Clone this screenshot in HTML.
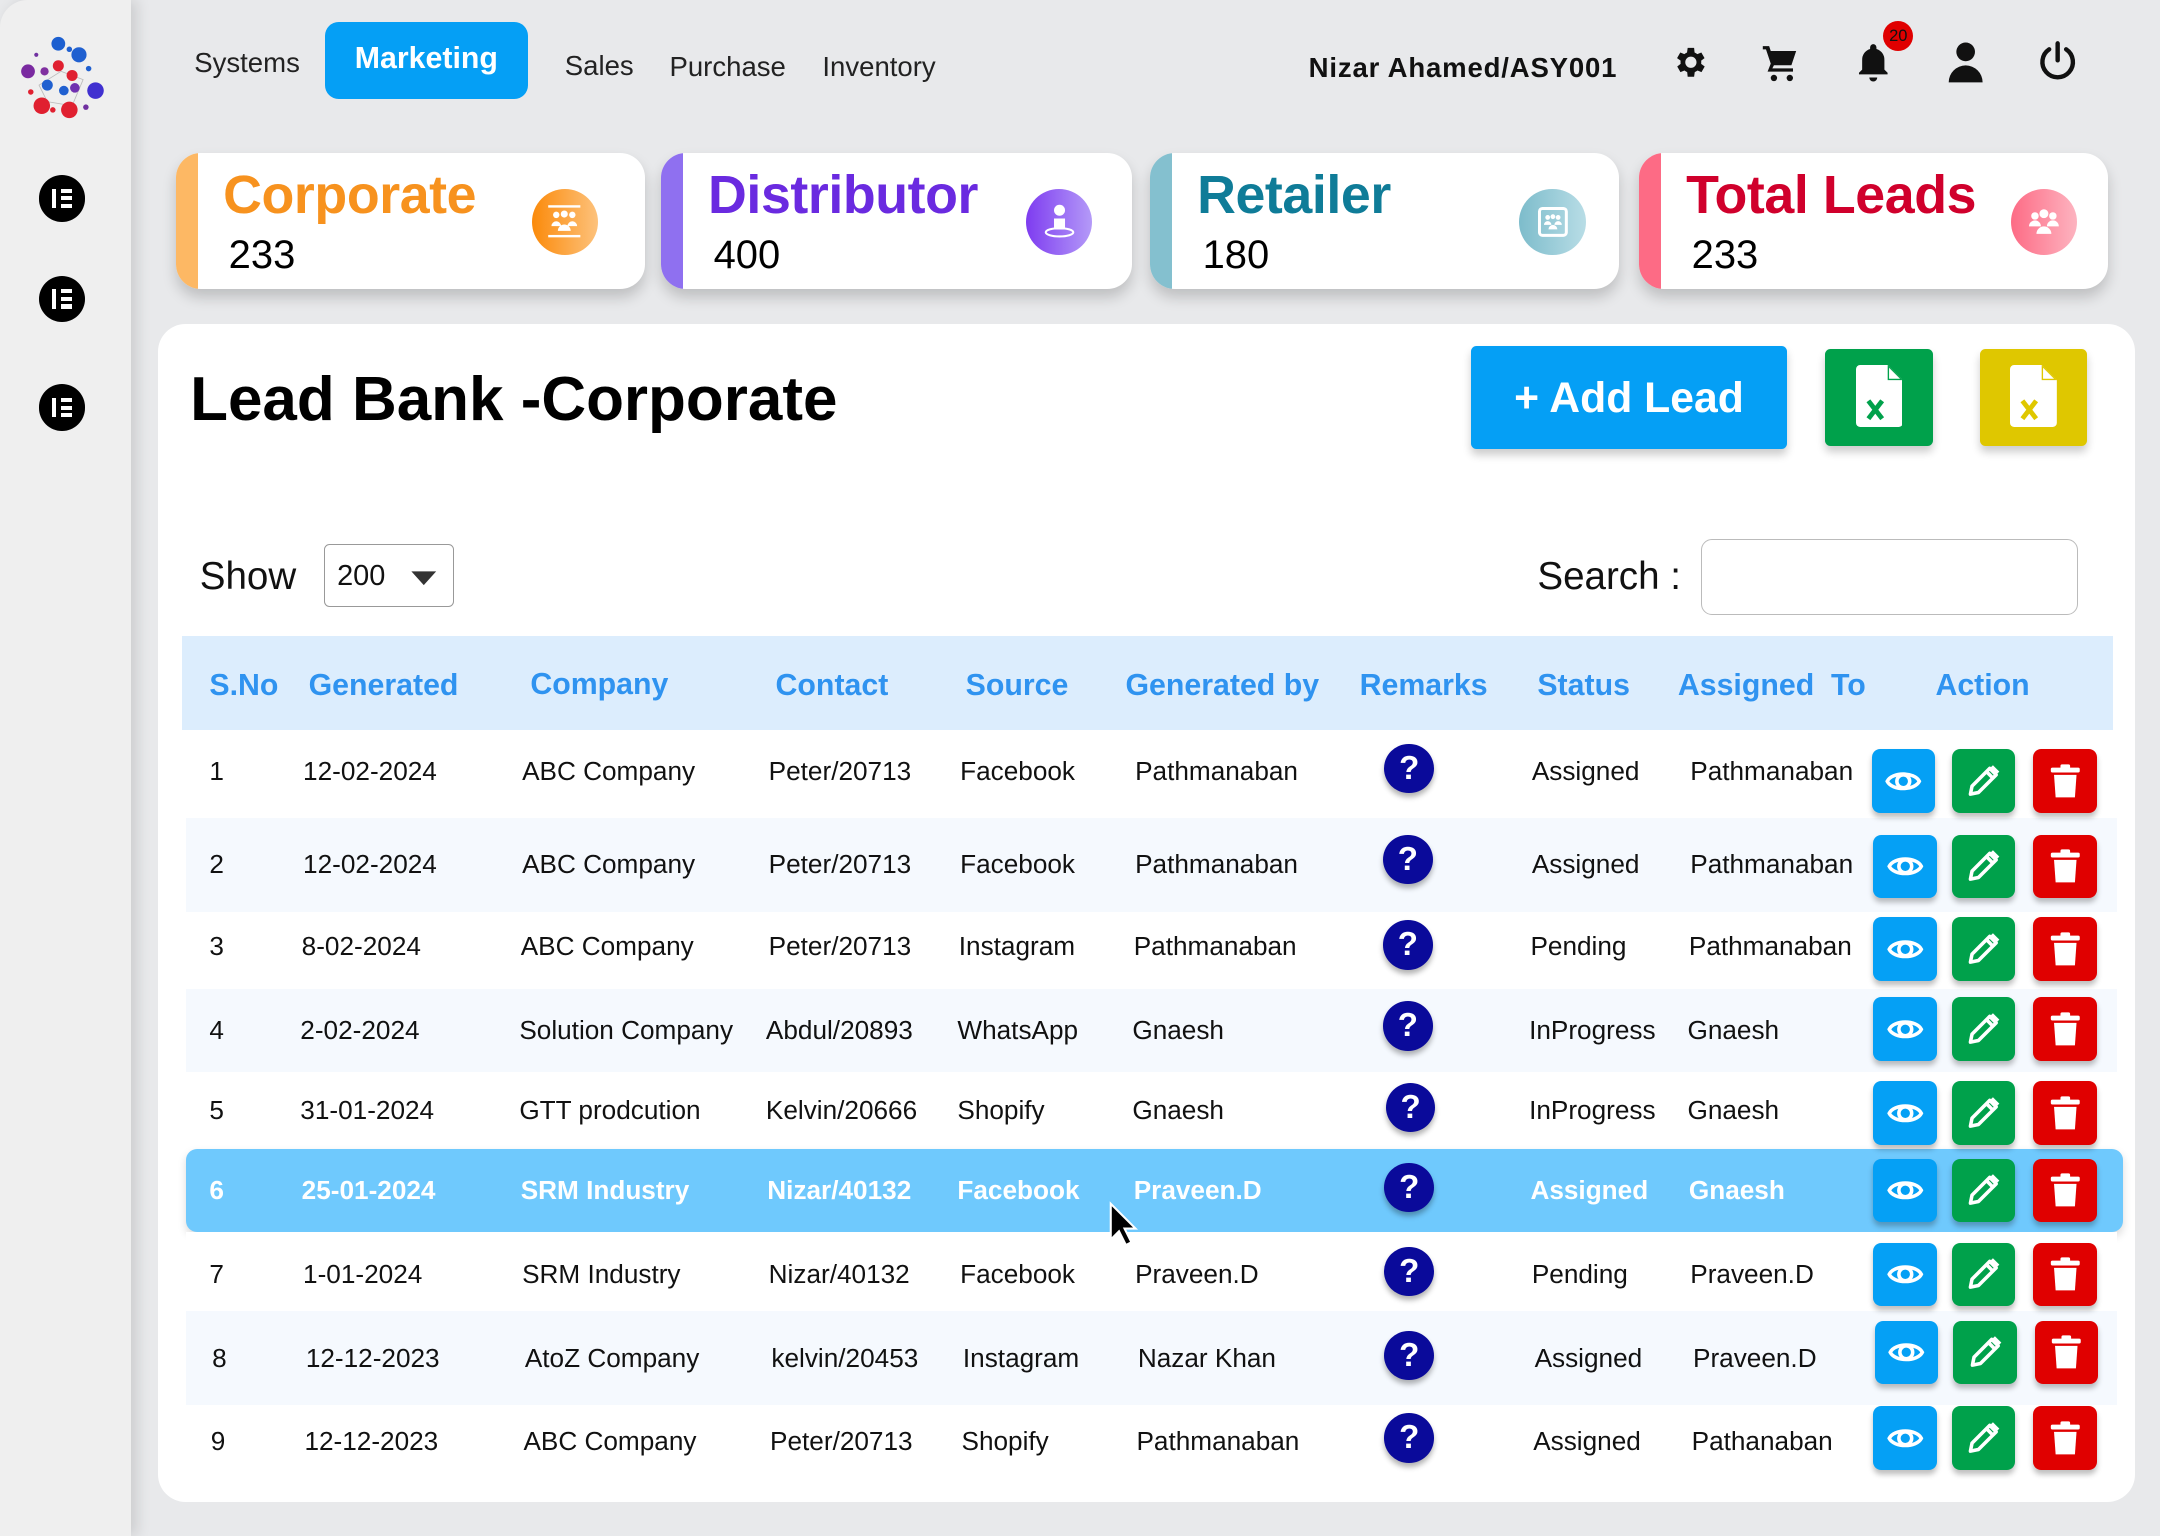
<!DOCTYPE html>
<html><head><meta charset="utf-8">
<style>
html,body{margin:0;padding:0;width:2160px;height:1536px;overflow:hidden;background:#e8e9eb}
#z{zoom:1.37755;width:1568px;height:1115px;position:relative;font-family:"Liberation Sans",sans-serif;color:#111}
.a{position:absolute}
.side{left:0;top:0;width:95px;height:1115px;background:#efefef;box-shadow:4px 0 10px rgba(0,0,0,.12);border-radius:20px 0 0 0}
.sico{width:34px;height:34px;border-radius:50%;background:#000;left:28px}
.sico i{position:absolute;left:10px;top:10px;width:3px;height:14px;background:#fff}
.sico b{position:absolute;left:16px;width:8px;height:3px;background:#fff}
.nav{top:34px;font-size:20px;color:#222}
.card{height:99px;top:111px;background:#fff;border-radius:18px;box-shadow:0 6px 10px rgba(0,0,0,.18);overflow:hidden}
.card .bar{left:0;top:0;width:16px;height:100%}
.card .t{left:34px;top:8px;font-size:39px;font-weight:bold;letter-spacing:-0.3px}
.card .n{left:38px;top:58px;font-size:29px;color:#000}
.card .ic{width:48px;height:48px;border-radius:50%;top:26px}
.panel{left:115px;top:235px;width:1435px;height:855px;background:#fff;border-radius:20px}
.hd{left:132px;top:462px;width:1402px;height:68px;background:#dcedfd}
.hd span{position:absolute;top:24px;font-size:22px;font-weight:bold;color:#2f93f0}
.row{left:135px;width:1402px}
.row span{position:absolute;font-size:19px;color:#111;white-space:nowrap}
.hl{background:#6fc9fd;border-radius:8px;box-shadow:0 3px 6px rgba(0,0,0,.15)}
.hl span{color:#fff;font-weight:bold}
.q{width:36px;height:36px;border-radius:50%;background:#0a0a9a;box-shadow:0 3px 4px rgba(0,0,0,.3);color:#fff;font-weight:bold;font-size:24px;text-align:center;line-height:36px}
.btn{width:46px;height:46px;border-radius:6px;box-shadow:0 3px 4px rgba(0,0,0,.25)}
.btn svg{position:absolute;left:9px;top:9px}
</style></head><body><div id="z">
<svg width="0" height="0" style="position:absolute">
<symbol id="eye" viewBox="0 0 24 24"><path d="M2 12C5 6 19 6 22 12C19 18 5 18 2 12Z" fill="none" stroke="#fff" stroke-width="2.2"/><circle cx="12" cy="12" r="4" fill="none" stroke="#fff" stroke-width="2.2"/></symbol>
<symbol id="pen" viewBox="0 0 24 24"><path d="M4 20L5 15L16 4L20 8L9 19Z" fill="none" stroke="#fff" stroke-width="2.2" stroke-linejoin="round"/><path d="M14 6L18 10" stroke="#fff" stroke-width="2.2"/><path d="M16 4L20 8L22 6L18 2Z" fill="#fff"/></symbol>
<symbol id="trash" viewBox="0 0 24 24"><rect x="3" y="3.5" width="18" height="3" rx="1" fill="#fff"/><rect x="9" y="1.5" width="6" height="3" rx="1" fill="#fff"/><path d="M5 8H19L18 22H6Z" fill="#fff"/></symbol>
</svg>
<div class="a side"></div>
<svg class="a" style="left:12px;top:22px" width="70" height="70" viewBox="0 0 70 70">
<g stroke="#bbb" stroke-width=".6" fill="none"><path d="M16 40L32 30L48 36L40 55L22 52Z"/></g>
<circle cx="30" cy="10" r="5" fill="#1c5fd0"/><circle cx="45" cy="18" r="5.5" fill="#2060d0"/><circle cx="38" cy="14" r="2" fill="#2060d0"/>
<circle cx="8" cy="30" r="5" fill="#7a2aa0"/><circle cx="20" cy="30" r="3" fill="#8030a0"/><circle cx="30" cy="26" r="4" fill="#e02030"/>
<circle cx="40" cy="33" r="4" fill="#e02030"/><circle cx="52" cy="28" r="2" fill="#2060d0"/><circle cx="22" cy="40" r="4" fill="#2060d0"/>
<circle cx="34" cy="44" r="3.5" fill="#2060d0"/><circle cx="42" cy="42" r="3.5" fill="#7030b0"/><circle cx="57" cy="44" r="6" fill="#4030d0"/>
<circle cx="10" cy="45" r="2" fill="#e02030"/><circle cx="18" cy="55" r="6" fill="#e02030"/><circle cx="38" cy="58" r="6" fill="#e02030"/>
<circle cx="26" cy="58" r="2" fill="#e02030"/><circle cx="50" cy="56" r="2" fill="#7030a0"/><circle cx="14" cy="18" r="1.5" fill="#7030a0"/>
</svg>
<div class="a sico" style="top:127px"><i></i><b style="top:10px"></b><b style="top:15.5px"></b><b style="top:21px"></b></div>
<div class="a sico" style="top:200px"><i></i><b style="top:10px"></b><b style="top:15.5px"></b><b style="top:21px"></b></div>
<div class="a sico" style="top:279px"><i></i><b style="top:10px"></b><b style="top:15.5px"></b><b style="top:21px"></b></div>

<div class="a nav" style="left:141px">Systems</div>
<div class="a" style="left:236px;top:16px;width:147px;height:56px;background:#059ff5;border-radius:10px;color:#fff;font-weight:bold;font-size:22px;text-align:center;line-height:54px">Marketing</div>
<div class="a nav" style="left:410px;top:36px">Sales</div>
<div class="a nav" style="left:486px;top:37px">Purchase</div>
<div class="a nav" style="left:597px;top:37px">Inventory</div>
<div class="a" style="left:950px;top:38px;font-size:20px;font-weight:bold;color:#111;letter-spacing:.6px">Nizar Ahamed/ASY001</div>
<svg class="a" style="left:1212px;top:31px" width="28" height="28" viewBox="0 0 24 24"><path fill="#111" d="M19.4 13a7.5 7.5 0 000-2l2.1-1.6-2-3.5-2.5 1a7.3 7.3 0 00-1.7-1L15 3h-4l-.4 2.9a7.3 7.3 0 00-1.7 1l-2.5-1-2 3.5L6.6 11a7.5 7.5 0 000 2l-2.1 1.6 2 3.5 2.5-1a7.3 7.3 0 001.7 1L11 21h4l.4-2.9a7.3 7.3 0 001.7-1l2.5 1 2-3.5ZM13 15.5A3.5 3.5 0 1113 8.5a3.5 3.5 0 010 7Z"/></svg>
<svg class="a" style="left:1278px;top:31px" width="28" height="30" viewBox="0 0 24 26"><path fill="#111" d="M1 2h4l1 3h16l-3 9H8l-1 2h13v2H4l2-5L3 4H1Z"/><circle cx="8" cy="22" r="2" fill="#111"/><circle cx="18" cy="22" r="2" fill="#111"/></svg>
<svg class="a" style="left:1346px;top:30px" width="28" height="30" viewBox="0 0 24 26"><path fill="#111" d="M12 2a2 2 0 012 2v1a7 7 0 015 7v6l2 2v1H3v-1l2-2v-6a7 7 0 015-7V4a2 2 0 012-2Z"/><path fill="#111" d="M9.5 23h5a2.5 2.5 0 01-5 0Z"/></svg>
<div class="a" style="left:1367px;top:15px;width:22px;height:22px;border-radius:50%;background:#e00000;color:#111;font-size:12px;text-align:center;line-height:22px">20</div>
<svg class="a" style="left:1412px;top:29px" width="30" height="32" viewBox="0 0 24 26"><circle cx="12" cy="7" r="5.5" fill="#111"/><path fill="#111" d="M2 25a10 10 0 0120 0Z"/></svg>
<svg class="a" style="left:1479px;top:29px" width="30" height="32" viewBox="0 0 24 26"><path d="M12 2v10" stroke="#111" stroke-width="2.6" stroke-linecap="round"/><path d="M7 5.5a9 9 0 1010 0" fill="none" stroke="#111" stroke-width="2.6" stroke-linecap="round"/></svg>

<div class="a card" style="left:128px;width:340px"><div class="a bar" style="background:#fdb864"></div><div class="a t" style="color:#f7921e">Corporate</div><div class="a n">233</div><div class="a ic" style="left:258px;background:linear-gradient(90deg,#fb8a0a,#fdc27c)"><svg class="a" style="left:10px;top:10px" width="28" height="28" viewBox="0 0 24 24"><rect x="2" y="2" width="20" height="1.5" fill="#fff"/><rect x="2" y="20.5" width="20" height="1.5" fill="#fff"/><circle cx="7" cy="8" r="2" fill="#fff"/><circle cx="12" cy="7.5" r="2.2" fill="#fff"/><circle cx="17" cy="8" r="2" fill="#fff"/><path d="M4 15a3 3 0 016 0Z M14 15a3 3 0 016 0Z M8 18a4 4 0 018 0Z" fill="#fff"/></svg></div></div>
<div class="a card" style="left:480px;width:342px"><div class="a bar" style="background:#8f70f0"></div><div class="a t" style="color:#6a2ae0">Distributor</div><div class="a n">400</div><div class="a ic" style="left:265px;background:linear-gradient(90deg,#7e3cf0,#b49af8)"><svg class="a" style="left:12px;top:10px" width="24" height="28" viewBox="0 0 24 28"><circle cx="12" cy="6" r="4" fill="#fff"/><path d="M8 12h8v8H8Z" fill="#fff"/><ellipse cx="12" cy="22" rx="10" ry="3" fill="none" stroke="#fff" stroke-width="1.5"/></svg></div></div>
<div class="a card" style="left:835px;width:340px"><div class="a bar" style="background:#84c0cf"></div><div class="a t" style="color:#0f7c98">Retailer</div><div class="a n">180</div><div class="a ic" style="left:268px;background:linear-gradient(90deg,#7dbccb,#b8dde6)"><svg class="a" style="left:11px;top:11px" width="26" height="26" viewBox="0 0 24 24"><rect x="3" y="3" width="18" height="18" rx="2" fill="none" stroke="#fff" stroke-width="2"/><circle cx="8.5" cy="9" r="1.6" fill="#fff"/><circle cx="12" cy="8.5" r="1.6" fill="#fff"/><circle cx="15.5" cy="9" r="1.6" fill="#fff"/><path d="M6 14a2.5 2.5 0 015 0Z M13 14a2.5 2.5 0 015 0Z M9 17a3 3 0 016 0Z" fill="#fff"/></svg></div></div>
<div class="a card" style="left:1190px;width:340px"><div class="a bar" style="background:#fd6b85"></div><div class="a t" style="color:#d0002c">Total Leads</div><div class="a n">233</div><div class="a ic" style="left:270px;background:linear-gradient(90deg,#fd6b85,#fdb4c0)"><svg class="a" style="left:11px;top:11px" width="26" height="26" viewBox="0 0 24 24"><circle cx="6" cy="8" r="2.5" fill="#fff"/><circle cx="12" cy="6.5" r="3" fill="#fff"/><circle cx="18" cy="8" r="2.5" fill="#fff"/><path d="M2 15a4 4 0 018 0Z M14 15a4 4 0 018 0Z M7 20a5 5 0 0110 0Z" fill="#fff"/></svg></div></div>

<div class="a panel"></div>
<div class="a" style="left:138px;top:264px;font-size:45px;font-weight:bold;color:#000">Lead Bank -Corporate</div>
<div class="a" style="left:1068px;top:251px;width:229px;height:75px;background:#059ff5;border-radius:4px;box-shadow:0 4px 6px rgba(0,0,0,.2);color:#fff;font-size:31px;font-weight:bold;text-align:center;line-height:76px">+ Add Lead</div>
<div class="a" style="left:1325px;top:253px;width:78px;height:71px;background:#00a14b;border-radius:4px;box-shadow:0 4px 6px rgba(0,0,0,.2)"><svg class="a" style="left:22px;top:12px" width="34" height="45" viewBox="0 0 34 45"><path d="M3 0H23L34 11V42a3 3 0 01-3 3H3a3 3 0 01-3-3V3a3 3 0 013-3Z" fill="#fff"/><path d="M23 0V11H34" fill="#00a14b"/><path d="M24 2V10H32Z" fill="#fff"/><path d="M9 26L19 39M19 26L9 39" stroke="#00a14b" stroke-width="3.5"/></svg></div>
<div class="a" style="left:1437px;top:253px;width:78px;height:71px;background:#dfc700;border-radius:4px;box-shadow:0 4px 6px rgba(0,0,0,.2)"><svg class="a" style="left:22px;top:12px" width="34" height="45" viewBox="0 0 34 45"><path d="M3 0H23L34 11V42a3 3 0 01-3 3H3a3 3 0 01-3-3V3a3 3 0 013-3Z" fill="#fff"/><path d="M23 0V11H34" fill="#dfc700"/><path d="M24 2V10H32Z" fill="#fff"/><path d="M9 26L19 39M19 26L9 39" stroke="#dfc700" stroke-width="3.5"/></svg></div>

<div class="a" style="left:145px;top:403px;font-size:28px;color:#111">Show</div>
<div class="a" style="left:235px;top:395px;width:93px;height:44px;border:1px solid #999;border-radius:4px;background:#fff"><span class="a" style="left:9px;top:11px;font-size:21px">200</span><svg class="a" style="left:62px;top:18px" width="20" height="12" viewBox="0 0 20 12"><path d="M1 1H19L10 11Z" fill="#333"/></svg></div>
<div class="a" style="left:1116px;top:403px;font-size:28px;color:#111">Search :</div>
<div class="a" style="left:1235px;top:391px;width:272px;height:54px;border:1px solid #bbb;border-radius:8px;background:#fff"></div>

<div class="a hd"><span style="left:20px">S.No</span><span style="left:92px">Generated</span><span style="left:253px;top:23px">Company</span><span style="left:431px">Contact</span><span style="left:569px">Source</span><span style="left:685px">Generated by</span><span style="left:855px">Remarks</span><span style="left:984px">Status</span><span style="left:1086px">Assigned&nbsp; To</span><span style="left:1273px">Action</span></div>

<div class="a row" style="top:530px;height:64px;background:#fff"><span style="left:17px;top:19px">1</span><span style="left:85px;top:19px">12-02-2024</span><span style="left:244px;top:19px">ABC Company</span><span style="left:423px;top:19px">Peter/20713</span><span style="left:562px;top:19px">Facebook</span><span style="left:689px;top:19px">Pathmanaban</span><span style="left:977px;top:19px">Assigned</span><span style="left:1092px;top:19px">Pathmanaban</span></div>
<div class="a row" style="top:594px;height:68px;background:#f5f9fe"><span style="left:17px;top:22px">2</span><span style="left:85px;top:22px">12-02-2024</span><span style="left:244px;top:22px">ABC Company</span><span style="left:423px;top:22px">Peter/20713</span><span style="left:562px;top:22px">Facebook</span><span style="left:689px;top:22px">Pathmanaban</span><span style="left:977px;top:22px">Assigned</span><span style="left:1092px;top:22px">Pathmanaban</span></div>
<div class="a row" style="top:662px;height:56px;background:#fff"><span style="left:17px;top:14px">3</span><span style="left:84px;top:14px">8-02-2024</span><span style="left:243px;top:14px">ABC Company</span><span style="left:423px;top:14px">Peter/20713</span><span style="left:561px;top:14px">Instagram</span><span style="left:688px;top:14px">Pathmanaban</span><span style="left:976px;top:14px">Pending</span><span style="left:1091px;top:14px">Pathmanaban</span></div>
<div class="a row" style="top:718px;height:60px;background:#f5f9fe"><span style="left:17px;top:19px">4</span><span style="left:83px;top:19px">2-02-2024</span><span style="left:242px;top:19px">Solution Company</span><span style="left:421px;top:19px">Abdul/20893</span><span style="left:560px;top:19px">WhatsApp</span><span style="left:687px;top:19px">Gnaesh</span><span style="left:975px;top:19px">InProgress</span><span style="left:1090px;top:19px">Gnaesh</span></div>
<div class="a row" style="top:778px;height:56px;background:#fff"><span style="left:17px;top:17px">5</span><span style="left:83px;top:17px">31-01-2024</span><span style="left:242px;top:17px">GTT prodcution</span><span style="left:421px;top:17px">Kelvin/20666</span><span style="left:560px;top:17px">Shopify</span><span style="left:687px;top:17px">Gnaesh</span><span style="left:975px;top:17px">InProgress</span><span style="left:1090px;top:17px">Gnaesh</span></div>
<div class="a row hl" style="top:834px;height:60px;width:1406px"><span style="left:17px;top:19px">6</span><span style="left:84px;top:19px">25-01-2024</span><span style="left:243px;top:19px">SRM Industry</span><span style="left:422px;top:19px">Nizar/40132</span><span style="left:560px;top:19px">Facebook</span><span style="left:688px;top:19px">Praveen.D</span><span style="left:976px;top:19px">Assigned</span><span style="left:1091px;top:19px">Gnaesh</span></div>
<div class="a row" style="top:894px;height:58px;background:#fff"><span style="left:17px;top:20px">7</span><span style="left:85px;top:20px">1-01-2024</span><span style="left:244px;top:20px">SRM Industry</span><span style="left:423px;top:20px">Nizar/40132</span><span style="left:562px;top:20px">Facebook</span><span style="left:689px;top:20px">Praveen.D</span><span style="left:977px;top:20px">Pending</span><span style="left:1092px;top:20px">Praveen.D</span></div>
<div class="a row" style="top:952px;height:68px;background:#f5f9fe"><span style="left:19px;top:23px">8</span><span style="left:87px;top:23px">12-12-2023</span><span style="left:246px;top:23px">AtoZ Company</span><span style="left:425px;top:23px">kelvin/20453</span><span style="left:564px;top:23px">Instagram</span><span style="left:691px;top:23px">Nazar Khan</span><span style="left:979px;top:23px">Assigned</span><span style="left:1094px;top:23px">Praveen.D</span></div>
<div class="a row" style="top:1020px;height:55px;background:#fff"><span style="left:18px;top:15px">9</span><span style="left:86px;top:15px">12-12-2023</span><span style="left:245px;top:15px">ABC Company</span><span style="left:424px;top:15px">Peter/20713</span><span style="left:563px;top:15px">Shopify</span><span style="left:690px;top:15px">Pathmanaban</span><span style="left:978px;top:15px">Assigned</span><span style="left:1093px;top:15px">Pathanaban</span></div>

<div class="a q" style="left:1005px;top:540px">?</div>
<div class="a q" style="left:1004px;top:606px">?</div>
<div class="a q" style="left:1004px;top:668px">?</div>
<div class="a q" style="left:1004px;top:727px">?</div>
<div class="a q" style="left:1006px;top:786px">?</div>
<div class="a q" style="left:1005px;top:844px">?</div>
<div class="a q" style="left:1005px;top:905px">?</div>
<div class="a q" style="left:1005px;top:966px">?</div>
<div class="a q" style="left:1005px;top:1026px">?</div>

<div class="a btn" style="left:1359px;top:544px;background:#05a0f5"><svg width="28" height="28"><use href="#eye"/></svg></div><div class="a btn" style="left:1417px;top:544px;background:#00a14b"><svg width="28" height="28"><use href="#pen"/></svg></div><div class="a btn" style="left:1476px;top:544px;background:#e00000"><svg width="28" height="28"><use href="#trash"/></svg></div>
<div class="a btn" style="left:1360px;top:606px;background:#05a0f5"><svg width="28" height="28"><use href="#eye"/></svg></div><div class="a btn" style="left:1417px;top:606px;background:#00a14b"><svg width="28" height="28"><use href="#pen"/></svg></div><div class="a btn" style="left:1476px;top:606px;background:#e00000"><svg width="28" height="28"><use href="#trash"/></svg></div>
<div class="a btn" style="left:1360px;top:666px;background:#05a0f5"><svg width="28" height="28"><use href="#eye"/></svg></div><div class="a btn" style="left:1417px;top:666px;background:#00a14b"><svg width="28" height="28"><use href="#pen"/></svg></div><div class="a btn" style="left:1476px;top:666px;background:#e00000"><svg width="28" height="28"><use href="#trash"/></svg></div>
<div class="a btn" style="left:1360px;top:724px;background:#05a0f5"><svg width="28" height="28"><use href="#eye"/></svg></div><div class="a btn" style="left:1417px;top:724px;background:#00a14b"><svg width="28" height="28"><use href="#pen"/></svg></div><div class="a btn" style="left:1476px;top:724px;background:#e00000"><svg width="28" height="28"><use href="#trash"/></svg></div>
<div class="a btn" style="left:1360px;top:785px;background:#05a0f5"><svg width="28" height="28"><use href="#eye"/></svg></div><div class="a btn" style="left:1417px;top:785px;background:#00a14b"><svg width="28" height="28"><use href="#pen"/></svg></div><div class="a btn" style="left:1476px;top:785px;background:#e00000"><svg width="28" height="28"><use href="#trash"/></svg></div>
<div class="a btn" style="left:1360px;top:841px;background:#05a0f5"><svg width="28" height="28"><use href="#eye"/></svg></div><div class="a btn" style="left:1417px;top:841px;background:#00a14b"><svg width="28" height="28"><use href="#pen"/></svg></div><div class="a btn" style="left:1476px;top:841px;background:#e00000"><svg width="28" height="28"><use href="#trash"/></svg></div>
<div class="a btn" style="left:1360px;top:902px;background:#05a0f5"><svg width="28" height="28"><use href="#eye"/></svg></div><div class="a btn" style="left:1417px;top:902px;background:#00a14b"><svg width="28" height="28"><use href="#pen"/></svg></div><div class="a btn" style="left:1476px;top:902px;background:#e00000"><svg width="28" height="28"><use href="#trash"/></svg></div>
<div class="a btn" style="left:1361px;top:959px;background:#05a0f5"><svg width="28" height="28"><use href="#eye"/></svg></div><div class="a btn" style="left:1418px;top:959px;background:#00a14b"><svg width="28" height="28"><use href="#pen"/></svg></div><div class="a btn" style="left:1477px;top:959px;background:#e00000"><svg width="28" height="28"><use href="#trash"/></svg></div>
<div class="a btn" style="left:1360px;top:1021px;background:#05a0f5"><svg width="28" height="28"><use href="#eye"/></svg></div><div class="a btn" style="left:1417px;top:1021px;background:#00a14b"><svg width="28" height="28"><use href="#pen"/></svg></div><div class="a btn" style="left:1476px;top:1021px;background:#e00000"><svg width="28" height="28"><use href="#trash"/></svg></div>

<svg class="a" style="left:804px;top:872px" width="26" height="34" viewBox="0 0 26 34"><path d="M2 2V28L8 22L13 32L17 30L12 20H20Z" fill="#000" stroke="#fff" stroke-width="1.5"/></svg>
</div></body></html>
